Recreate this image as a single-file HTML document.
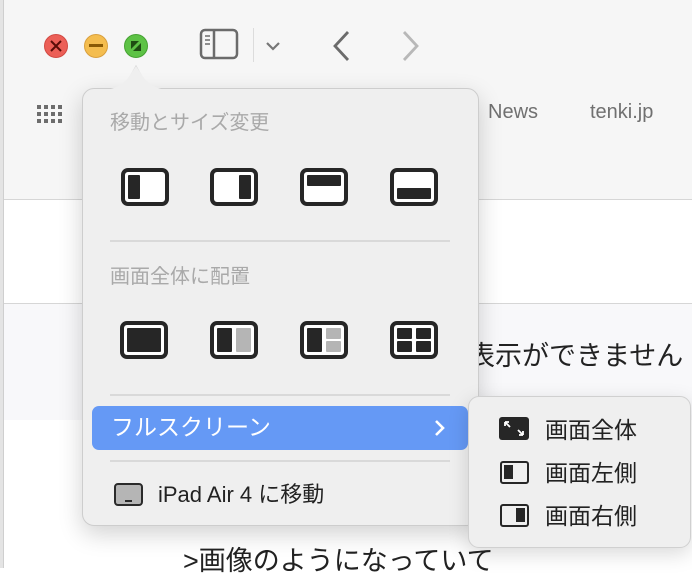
<!DOCTYPE html>
<html><head><meta charset="utf-8"><style>
*{margin:0;padding:0;box-sizing:border-box}
body{width:692px;height:568px;overflow:hidden;position:relative;background:#fff;font-family:"Liberation Sans","Noto Sans CJK JP",sans-serif}
.abs{position:absolute}
.ico{position:absolute;width:48px;height:38px;border:4px solid #262626;border-radius:7px;background:#fff}
.ico div{position:absolute;background:#262626;border-radius:1px}
.sep{position:absolute;left:110px;width:340px;height:2px;background:#d9d9d9}
.hdr{position:absolute;left:110px;font-size:20px;color:#a9a9a9;line-height:24px}
.si{position:absolute;font-size:23px;color:#222;line-height:28px}
</style></head><body>
<div class="abs" style="left:0;top:0;width:692px;height:200px;background:#f6f6f6;border-bottom:1px solid #d6d6d6"></div>
<div class="abs" style="left:0;top:303px;width:692px;height:117px;background:#f8f8fa;border-top:1px solid #d6d6d6"></div>
<div class="abs" style="left:0;top:0;width:4px;height:568px;background:#e4e4e4;border-right:1px solid #cfcfcf"></div>
<div class="abs" style="left:44px;top:34px;width:24px;height:24px;border-radius:50%;background:#ec5f57;border:1px solid #d24a43"></div>
<svg class="abs" style="left:44px;top:34px" width="24" height="24"><path d="M7 7l10 10M17 7L7 17" stroke="#5a0d08" stroke-width="2"/></svg>
<div class="abs" style="left:84px;top:34px;width:24px;height:24px;border-radius:50%;background:#f4bd4f;border:1px solid #d9a03e"></div>
<div class="abs" style="left:89px;top:44px;width:14px;height:3px;background:#8a5a05"></div>
<div class="abs" style="left:124px;top:34px;width:24px;height:24px;border-radius:50%;background:#5dc245;border:1px solid #46a232"></div>
<svg class="abs" style="left:124px;top:34px" width="24" height="24"><path d="M7 7h8L7 15z M17 9v8H9z" fill="#1e4d12"/></svg>
<svg class="abs" style="left:199px;top:28px" width="42" height="34"><rect x="2" y="2" width="36" height="28" rx="4" fill="none" stroke="#6b6b6b" stroke-width="2.5"/><line x1="15" y1="2" x2="15" y2="30" stroke="#6b6b6b" stroke-width="2.5"/><path d="M6 8h5M6 12h5M6 16h5" stroke="#6b6b6b" stroke-width="1.6"/></svg>
<div class="abs" style="left:253px;top:28px;width:1px;height:34px;background:#dcdcdc"></div>
<svg class="abs" style="left:265px;top:40px" width="16" height="12"><path d="M2 3l6 6 6-6" fill="none" stroke="#777" stroke-width="2.2"/></svg>
<svg class="abs" style="left:330px;top:30px" width="22" height="32"><path d="M18 2L5 16l13 14" fill="none" stroke="#6b6b6b" stroke-width="2.8"/></svg>
<svg class="abs" style="left:400px;top:30px" width="22" height="32"><path d="M4 2l13 14L4 30" fill="none" stroke="#b8b8b8" stroke-width="2.8"/></svg>
<svg class="abs" style="left:37px;top:105px" width="26" height="20"><g fill="#6d6d6d"><rect x="0" y="0" width="4" height="4"/><rect x="7" y="0" width="4" height="4"/><rect x="14" y="0" width="4" height="4"/><rect x="21" y="0" width="4" height="4"/><rect x="0" y="7" width="4" height="4"/><rect x="7" y="7" width="4" height="4"/><rect x="14" y="7" width="4" height="4"/><rect x="21" y="7" width="4" height="4"/><rect x="0" y="14" width="4" height="4"/><rect x="7" y="14" width="4" height="4"/><rect x="14" y="14" width="4" height="4"/><rect x="21" y="14" width="4" height="4"/></g></svg>
<div class="abs" style="left:488px;top:101px;font-size:20px;color:#707070">News</div>
<div class="abs" style="left:590px;top:101px;font-size:20px;color:#707070">tenki.jp</div>
<div class="abs" style="left:468px;top:338px;font-size:27px;color:#222;white-space:nowrap;line-height:36px">表示ができません</div>
<div class="abs" style="left:183px;top:543px;font-size:27px;color:#222;white-space:nowrap;line-height:36px">&gt;画像のようになっていて</div>
<svg class="abs" style="left:100px;top:60px" width="80" height="32"><path d="M0 32 Q20 30 28 20 L36 6 L44 20 Q52 30 72 32Z" fill="#efefef" stroke="#cfcfcf"/></svg>
<div class="abs" style="left:82px;top:88px;width:397px;height:438px;background:#efefef;border:1px solid #cdcdcd;border-radius:12px;box-shadow:0 8px 24px rgba(0,0,0,.18)"></div>
<svg class="abs" style="left:106px;top:60px" width="60" height="32"><path d="M0 30 Q14 28 22 18 L30 6 L38 18 Q46 28 60 30 L60 32 L0 32Z" fill="#efefef"/></svg>
<div class="hdr" style="top:111px">移動とサイズ変更</div>
<div class="ico" style="left:121px;top:168px"><div style="left:3px;top:3px;width:12px;height:24px"></div></div>
<div class="ico" style="left:210px;top:168px"><div style="right:3px;top:3px;width:12px;height:24px"></div></div>
<div class="ico" style="left:300px;top:168px"><div style="left:3px;top:3px;width:34px;height:11px"></div></div>
<div class="ico" style="left:390px;top:168px"><div style="left:3px;bottom:3px;width:34px;height:11px"></div></div>
<div class="sep" style="top:240px"></div>
<div class="hdr" style="top:265px">画面全体に配置</div>
<div class="ico" style="left:120px;top:321px"><div style="left:3px;top:3px;width:34px;height:24px"></div></div>
<div class="ico" style="left:210px;top:321px"><div style="left:3px;top:3px;width:15px;height:24px"></div><div style="right:3px;top:3px;width:15px;height:24px;background:#b5b5b5"></div></div>
<div class="ico" style="left:300px;top:321px"><div style="left:3px;top:3px;width:15px;height:24px"></div><div style="right:3px;top:3px;width:15px;height:11px;background:#b5b5b5"></div><div style="right:3px;bottom:3px;width:15px;height:11px;background:#b5b5b5"></div></div>
<div class="ico" style="left:390px;top:321px"><div style="left:3px;top:3px;width:15px;height:11px"></div><div style="right:3px;top:3px;width:15px;height:11px"></div><div style="left:3px;bottom:3px;width:15px;height:11px"></div><div style="right:3px;bottom:3px;width:15px;height:11px"></div></div>
<div class="sep" style="top:394px"></div>
<div class="abs" style="left:92px;top:406px;width:376px;height:44px;background:#6599f5;border-radius:7px"></div>
<div class="abs" style="left:111px;top:413px;font-size:23px;color:#fff;line-height:28px">フルスクリーン</div>
<svg class="abs" style="left:433px;top:419px" width="14" height="18"><path d="M3 2l7 7-7 7" fill="none" stroke="#fff" stroke-width="2.6"/></svg>
<div class="sep" style="top:460px"></div>
<div class="abs" style="left:114px;top:483px;width:29px;height:23px;border:2.5px solid #2a2a2a;border-radius:4px;background:#b5b5b5"></div>
<div class="abs" style="left:125px;top:500px;width:7px;height:1.5px;background:#2a2a2a"></div>
<div class="abs" style="left:158px;top:481px;font-size:22px;color:#222;line-height:28px">iPad Air 4 に移動</div>
<div class="abs" style="left:468px;top:396px;width:223px;height:152px;background:#efefef;border:1px solid #d0d0d0;border-radius:11px;box-shadow:0 6px 20px rgba(0,0,0,.15)">
<svg class="abs" style="left:30px;top:20px" width="31" height="24"><rect x="0" y="0" width="30" height="23" rx="3" fill="#262626"/><path d="M6 5l5 5M6 5v4M6 5h4M24 18l-5-5M24 18v-4M24 18h-4" stroke="#fff" stroke-width="1.8" fill="none"/></svg>
<div class="si" style="left:76px;top:19px">画面全体</div>
<div class="abs" style="left:31px;top:64px;width:29px;height:23px;border:2.5px solid #262626;border-radius:3px"><div class="abs" style="left:2px;top:2px;width:9px;height:14px;background:#262626"></div></div>
<div class="si" style="left:76px;top:62px">画面左側</div>
<div class="abs" style="left:31px;top:107px;width:29px;height:23px;border:2.5px solid #262626;border-radius:3px"><div class="abs" style="right:2px;top:2px;width:9px;height:14px;background:#262626"></div></div>
<div class="si" style="left:76px;top:105px">画面右側</div>
</div>
</body></html>
